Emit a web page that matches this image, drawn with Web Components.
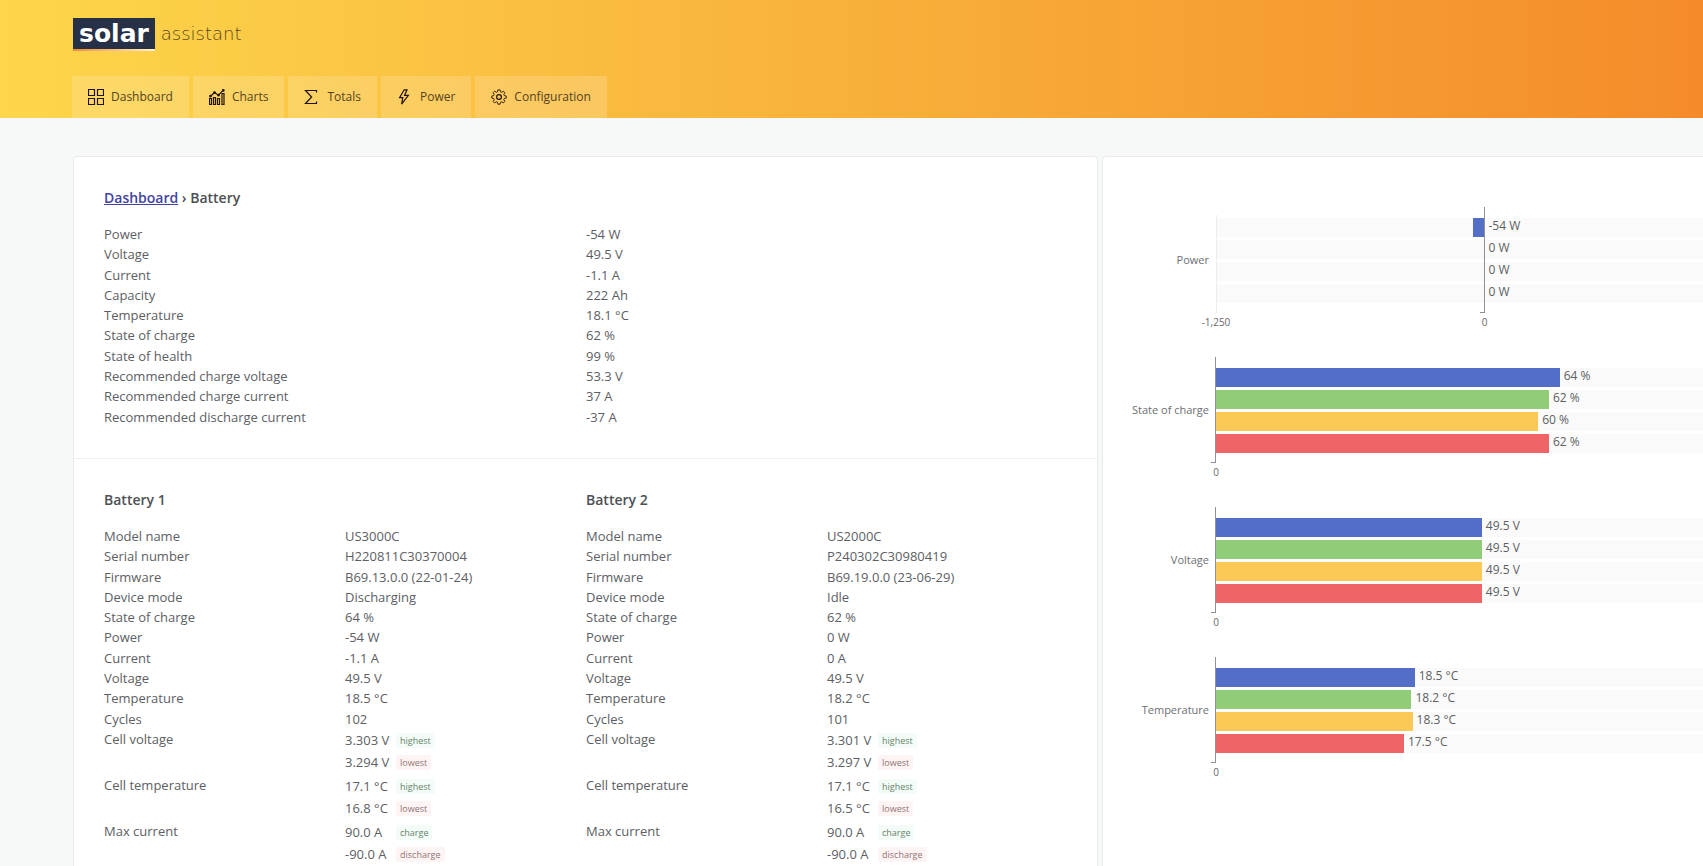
<!DOCTYPE html>
<html lang="en">
<head>
<meta charset="utf-8">
<title>Battery - Solar Assistant</title>
<style>
  body { margin: 0; background: #f7f8f8; color: #5c6064; font: 13px/20px "Open Sans", "Noto Sans", sans-serif; }
</style>
</head>
<body>
<solar-app></solar-app>
<script>
const define = (name, html, setup) => {
  const template = document.createElement('template');
  template.innerHTML = html;
  customElements.define(name, class extends HTMLElement {
    connectedCallback() {
      if (this.shadowRoot) return;
      const root = this.attachShadow({ mode: 'open' });
      root.append(template.content.cloneNode(true));
      if (setup) setup(this, root);
    }
  });
};

const icons = {
  grid: '<path d="M.5.5h6v6h-6zM9.5.5h6v6h-6zM.5 9.5h6v6h-6zM9.5 9.5h6v6h-6z"/>',
  chart: '<path d="M.5 15.5v-6h2v6zM4.5 15.5v-7h2v7zM8.5 15.5v-6h2v6zM13 15.5v-11h2v11z"/><path d="M1.5 7.2 5.5 3.6l4 2.6 4.8-5"/><circle cx="1.5" cy="7.2" r=".8"/><circle cx="5.5" cy="3.6" r=".8"/><circle cx="9.5" cy="6.2" r=".8"/><circle cx="14.3" cy="1.4" r=".8"/>',
  sigma: '<path d="M12.5 3.5v-2h-11L7.6 8l-6.1 6.5h11v-2"/>',
  bolt: '<path d="M7.2.8 2.6 8.6h3.2L4.6 15.2l6.8-8.8H7.6L10 .8z"/>',
  gear: '<circle cx="8" cy="8" r="2.4"/><path d="M6.9.9h2.2l.4 1.9 1.2.5 1.7-1.1 1.5 1.5-1.1 1.7.5 1.2 1.9.4v2.1l-1.9.4-.5 1.2 1.1 1.7-1.5 1.5-1.7-1.1-1.2.5-.4 1.9H6.9l-.4-1.9-1.2-.5-1.7 1.1-1.5-1.5 1.1-1.7-.5-1.2-1.9-.4V7l1.9-.4.5-1.2-1.1-1.7 1.5-1.5 1.7 1.1 1.2-.5z" stroke-width=".9"/>'
};

define('nav-tab', `<style>
  :host { display: block; }
  a { display: flex; align-items: center; gap: 7px; height: 42px; padding: 0 16px; box-sizing: border-box;
      background: rgba(255,255,255,.17); color: #55431f; font-size: 12px; line-height: 18px; font-weight: 500; text-decoration: none; }
  svg { width: 16px; height: 16px; fill: none; stroke: #22120c; stroke-width: 1.2; }
</style><a href="#"><svg viewBox="0 0 16 16" aria-hidden="true"></svg><slot></slot></a>`, (host, root) => {
  root.querySelector('svg').innerHTML = icons[host.getAttribute('icon')];
});

define('app-header', `<style>
  :host { display: flex; flex-direction: column; justify-content: space-between; height: 118px; padding-left: 72px;
          background: linear-gradient(90deg, #fdd64b, #f48b2a); }
  .logo { display: flex; align-items: center; gap: 6px; margin: 18px 0 0 1px; color: #5a4519; text-decoration: none; align-self: flex-start;
          font-family: "DejaVu Sans", sans-serif; font-size: 18px; line-height: 30px; font-weight: 200; }
  .logo b { padding: 0 6px 2px; background: linear-gradient(90deg, #f08a3c, #fff3d6) bottom / 100% 2px no-repeat, #263047;
            color: #fff; font-size: 25px; font-weight: 700; line-height: 31px; }
  .logo span { padding-bottom: 2px; }
  nav { display: flex; gap: 4px; }
</style>
<a class="logo" href="#"><b>solar</b><span>assistant</span></a>
<nav>
  <nav-tab icon="grid">Dashboard</nav-tab><nav-tab icon="chart">Charts</nav-tab><nav-tab icon="sigma">Totals</nav-tab>
  <nav-tab icon="bolt">Power</nav-tab><nav-tab icon="gear">Configuration</nav-tab>
</nav>`);

define('ui-card', `<style>
  :host { display: block; background: #fff; border: 1px solid #e9ebeb; border-radius: 4px; box-sizing: border-box; overflow: hidden; }
</style><slot></slot>`);

define('value-tag', `<style>
  :host { display: inline-block; padding: 0 4px; border-radius: 2px; font-size: 9px; line-height: 15px; color: #67836f; background: #f3fcf6; }
  :host([low]) { color: #8f7474; background: #fef4f4; }
</style><slot></slot>`);

/* Two-column list of readings; a row with several readings stacks them with a tag each. */
define('reading-list', `<style>
  :host { display: block; }
  dl { margin: 0; display: grid; grid-auto-rows: 1fr; min-height: 203px; }
  dl.pairs { min-height: 0; grid-auto-rows: auto; }
  .row { display: grid; grid-template-columns: 1fr 1fr; }
  .pairs .row { padding-bottom: 2px; }
  dd { margin: 0; }
  .line { display: flex; align-items: center; height: 22px; }
  .line span { width: 51px; white-space: nowrap; }
</style><dl class="single"></dl><dl class="pairs"></dl>`, (host, root) => {
  const [single, pairs] = root.querySelectorAll('dl');
  const rows = host.getAttribute('rows').split(';').map(r => r.split('|'));
  for (const [name, ...values] of rows) {
    if (values.length === 1) {
      single.insertAdjacentHTML('beforeend', `<div class="row"><dt>${name}</dt><dd>${values[0]}</dd></div>`);
    } else {
      const [a, ta, b, tb] = values;
      pairs.insertAdjacentHTML('beforeend', `<div class="row"><dt>${name}</dt><dd>
        <div class="line"><span>${a}</span><value-tag>${ta}</value-tag></div>
        <div class="line"><span>${b}</span><value-tag low>${tb}</value-tag></div></dd></div>`);
    }
  }
  if (!pairs.children.length) pairs.remove();
});

define('bar-chart', `<style>
  :host { display: grid; grid-template-columns: 106px 1fr; column-gap: 7px; font-size: 11px; line-height: 18px; color: #6c6f73; }
  .name { text-align: right; align-self: center; white-space: nowrap; }
  .plot { position: relative; display: flex; flex-direction: column; gap: 3px; height: 106px; padding: 11px 0 10px; box-sizing: border-box; }
  .band { flex: 1; display: flex; background: #fafafa; }
  .bar { flex: none; }
  .value { padding-left: 4px; white-space: nowrap; font-size: 12px; line-height: 16px; color: #5c5f63; }
  .axis { position: absolute; top: 0; bottom: 0; width: 5px; margin-left: -5px; box-sizing: border-box;
          border-right: 1px solid #8d9096; border-bottom: 1px solid #8d9096; }
  .edge { position: absolute; left: 0; top: 8px; bottom: 0; border-left: 1px solid #ebedf0; }
  .ticks { grid-column: 2; display: flex; height: 18px; font-size: 10px; color: #66696d; }
  .ticks span { width: 50%; }
  .ticks i { display: inline-block; font-style: normal; transform: translateX(-50%); }
</style><div class="name"></div><div class="plot"></div><div class="ticks"></div>`, (host, root) => {
  const colors = ['#546dc6', '#91cd78', '#fdc956', '#ef6567'];
  const max = +host.getAttribute('max');
  const min = +(host.getAttribute('min') || 0);
  const unit = host.getAttribute('unit');
  const at = v => (v - min) / (max - min) * 100;
  root.querySelector('.name').textContent = host.getAttribute('name');
  const plot = root.querySelector('.plot');
  host.getAttribute('values').split(',').forEach((text, i) => {
    const v = +text;
    const start = at(Math.min(v, 0)), size = at(Math.max(v, 0)) - start;
    plot.insertAdjacentHTML('beforeend', `<div class="band"><div class="bar" style="margin-left:${start}%;width:${size}%;background:${colors[i]}"></div><span class="value">${text} ${unit}</span></div>`);
  });
  if (min < 0) plot.insertAdjacentHTML('beforeend', '<div class="edge"></div>');
  plot.insertAdjacentHTML('beforeend', `<div class="axis" style="left:${at(0)}%"></div>`);
  root.querySelector('.ticks').innerHTML = (min < 0 ? `<span><i>${min.toLocaleString('en-US')}</i></span>` : '') + '<span><i>0</i></span>';
});

define('solar-app', `<style>
  :host { display: block; height: 100vh; overflow: hidden; }
  main { display: grid; grid-template-columns: 1025fr 601fr; gap: 4px; padding: 38px 0 0 73px; }
  section { padding: 31px 29px 31px 30px; }
  section + section { border-top: 1px solid #eeefef; }
  h2 { margin: 0 0 16px; font-size: 14px; line-height: 20px; font-weight: 600; color: #4d5054; }
  h2 a { color: #3f43a3; }
  .batteries { display: grid; grid-template-columns: 1fr 1fr; }
  ui-card.charts { border-right: 0; border-radius: 4px 0 0 0; }
  /* The plots run past the card's right edge. */
  .stack { display: grid; gap: 26px; padding-top: 50px; margin-right: -50px; }
</style>
<app-header></app-header>
<main>
  <ui-card>
    <section>
      <h2><a href="#">Dashboard</a> › Battery</h2>
      <reading-list rows="Power|-54 W;Voltage|49.5 V;Current|-1.1 A;Capacity|222 Ah;Temperature|18.1 °C;State of charge|62 %;State of health|99 %;Recommended charge voltage|53.3 V;Recommended charge current|37 A;Recommended discharge current|-37 A"></reading-list>
    </section>
    <section class="batteries">
      <div>
        <h2>Battery 1</h2>
        <reading-list rows="Model name|US3000C;Serial number|H220811C30370004;Firmware|B69.13.0.0 (22-01-24);Device mode|Discharging;State of charge|64 %;Power|-54 W;Current|-1.1 A;Voltage|49.5 V;Temperature|18.5 °C;Cycles|102;Cell voltage|3.303 V|highest|3.294 V|lowest;Cell temperature|17.1 °C|highest|16.8 °C|lowest;Max current|90.0 A|charge|-90.0 A|discharge"></reading-list>
      </div>
      <div>
        <h2>Battery 2</h2>
        <reading-list rows="Model name|US2000C;Serial number|P240302C30980419;Firmware|B69.19.0.0 (23-06-29);Device mode|Idle;State of charge|62 %;Power|0 W;Current|0 A;Voltage|49.5 V;Temperature|18.2 °C;Cycles|101;Cell voltage|3.301 V|highest|3.297 V|lowest;Cell temperature|17.1 °C|highest|16.5 °C|lowest;Max current|90.0 A|charge|-90.0 A|discharge"></reading-list>
      </div>
    </section>
  </ui-card>
  <ui-card class="charts">
    <div class="stack">
      <bar-chart name="Power" min="-1250" max="1250" unit="W" values="-54,0,0,0"></bar-chart>
      <bar-chart name="State of charge" max="100" unit="%" values="64,62,60,62"></bar-chart>
      <bar-chart name="Voltage" max="100" unit="V" values="49.5,49.5,49.5,49.5"></bar-chart>
      <bar-chart name="Temperature" max="50" unit="°C" values="18.5,18.2,18.3,17.5"></bar-chart>
    </div>
  </ui-card>
</main>`);
</script>
</body>
</html>
